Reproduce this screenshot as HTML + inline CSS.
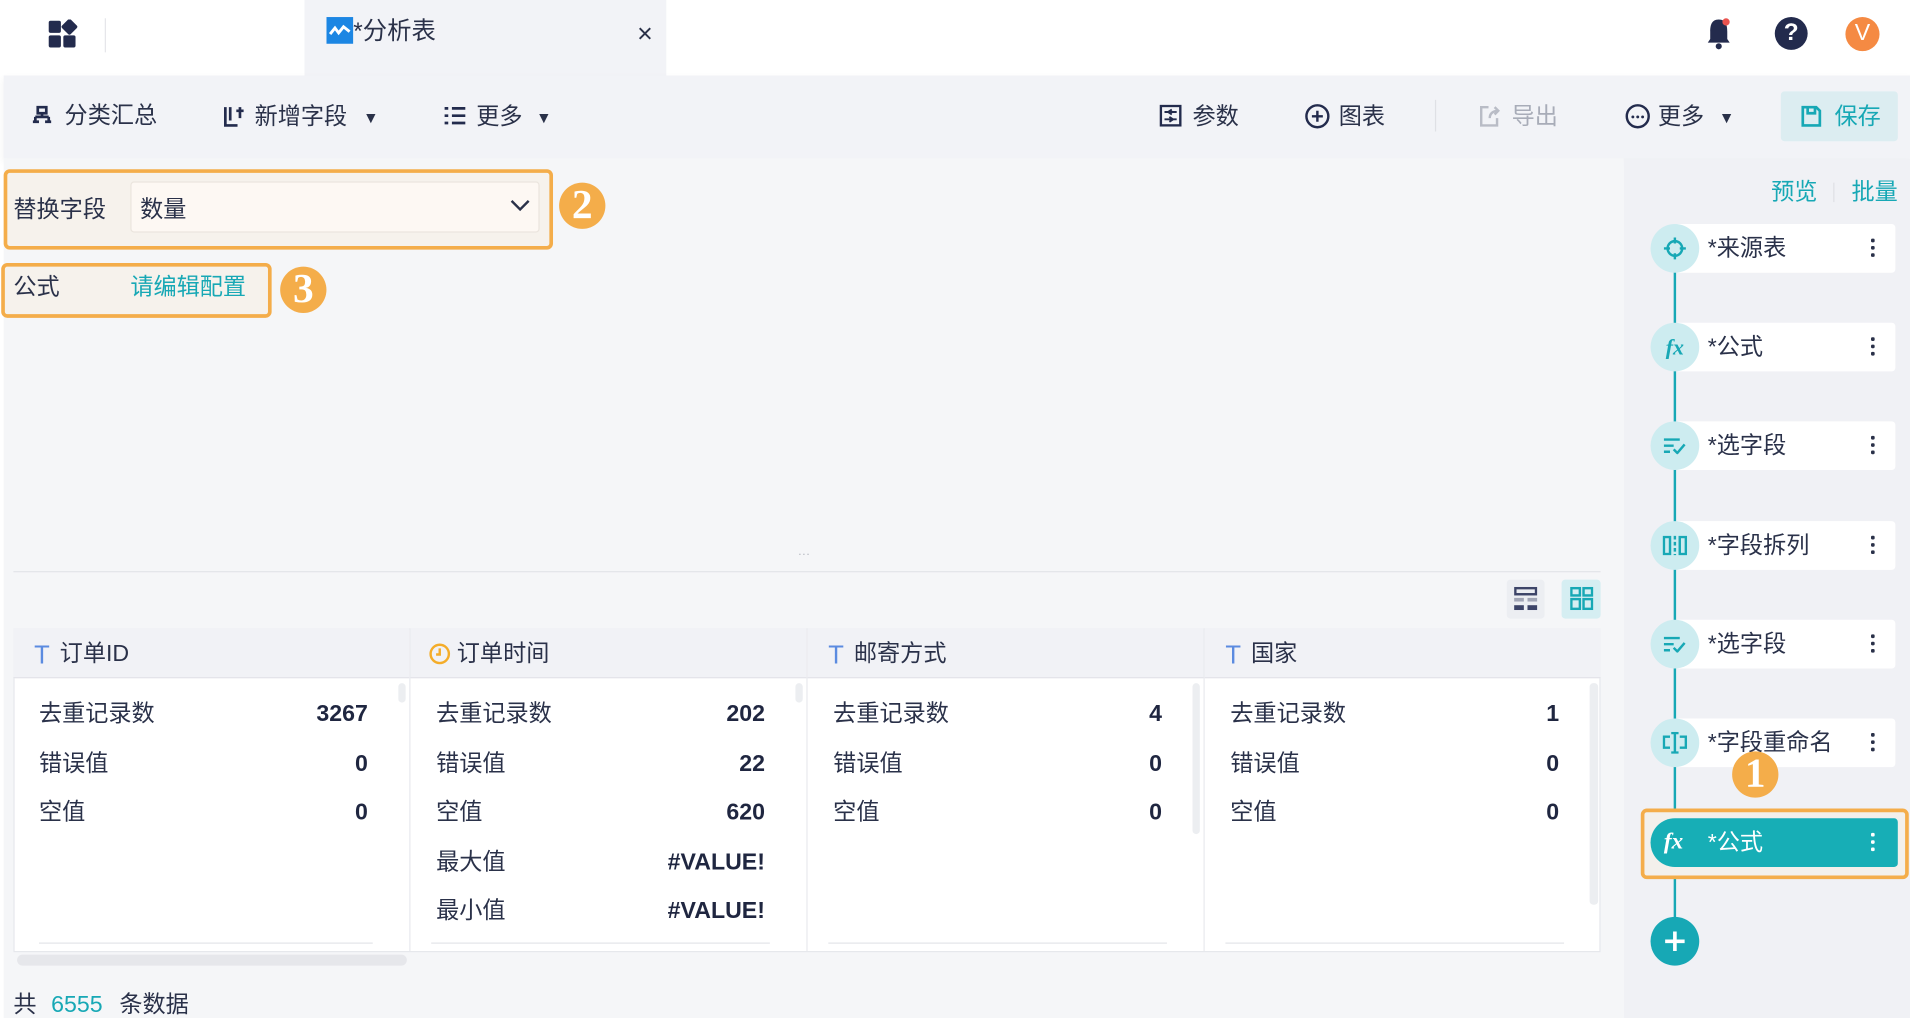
<!DOCTYPE html>
<html><head><meta charset="utf-8"><style>
*{box-sizing:border-box;margin:0;padding:0}
html,body{width:1910px;height:1018px;overflow:hidden;background:#fff}
body{font-family:"Liberation Sans","Noto Sans CJK SC",sans-serif;color:#2a3149}
#w{position:absolute;left:0;top:0;width:1568px;height:836px;transform:scale(1.2181,1.2177);transform-origin:0 0;font-size:19px}
.a{position:absolute}
.t{position:absolute;white-space:nowrap;line-height:1;padding-top:1px}
.teal{color:#17a8b5}
.badge{position:absolute;width:38px;height:38px;border-radius:50%;background:#f4ad4a;color:#fff;font-family:"Liberation Serif",serif;font-weight:bold;font-size:34px;text-align:center;line-height:38px}
.card{position:absolute;left:1375px;width:181px;height:40px;background:#fff;border-radius:3px}
.circ{position:absolute;left:1355px;width:40px;height:40px;border-radius:50%;background:#cdecf0;display:flex;align-items:center;justify-content:center;color:#17a8b5}
.ctext{position:absolute;left:1402px;font-size:19px;line-height:1;padding-top:1px}
.dots{position:absolute;left:1536px;width:4px}
.dots i{display:block;width:3px;height:3px;background:#2a3149;margin:0 0 3px 0;border-radius:1px}
.col{position:absolute;top:516px;width:326px;height:265px;border-right:1px solid #e8e9ee}
.hd{position:absolute;left:0;top:0;width:100%;height:41px;background:#f1f2f6;border-bottom:1px solid #e3e4e9}
.row{position:absolute;left:21px;right:34px;font-size:19px;line-height:1;padding-top:1px}
.row b{position:absolute;right:0;top:1px;font-weight:bold;color:#1f2640}
</style></head><body><div id="w">
<div class="a" style="left:0;top:0;width:1568px;height:62px;background:#fff"></div>
<svg class="a" style="left:39px;top:16px" width="26" height="26" viewBox="0 0 26 26"><rect x="1" y="1" width="10" height="10" rx="1.5" fill="#232b4d"/><rect x="13" y="1" width="10" height="10" rx="1.5" fill="#232b4d" transform="rotate(45 18 6)"/><rect x="1" y="13" width="10" height="10" rx="1.5" fill="#232b4d"/><rect x="13" y="13" width="10" height="10" rx="1.5" fill="#232b4d"/></svg>
<div class="a" style="left:86px;top:15px;width:1px;height:28px;background:#e5e6ea"></div>
<div class="a" style="left:250px;top:0;width:297px;height:62px;background:#f2f3f7"></div>
<svg class="a" style="left:268px;top:14px" width="22" height="22" viewBox="0 0 22 22"><rect width="22" height="22" fill="#1c86e3"/><path d="M3 14 L7 9 L10 13 L14 8 L19 12" stroke="#fff" stroke-width="2.4" fill="none"/></svg>
<div class="t" style="left:290px;top:15px;font-size:20px">*分析表</div>
<div class="t" style="left:523px;top:16px;font-size:22px;color:#2a3149">×</div>
<svg class="a" style="left:1398px;top:13px" width="26" height="28" viewBox="0 0 26 28"><path d="M13 3 C7 3 6 8 6 13 L6 19 L4 22 L22 22 L20 19 L20 13 C20 8 19 3 13 3Z" fill="#232b4d"/><circle cx="13" cy="25" r="2.5" fill="#232b4d"/><circle cx="19" cy="5" r="3" fill="#e9534f"/></svg>
<div class="a" style="left:1457px;top:14px;width:27px;height:27px;border-radius:50%;background:#232b4d;color:#fff;font-weight:bold;font-size:20px;text-align:center;line-height:27px">?</div>
<div class="a" style="left:1515px;top:14px;width:28px;height:28px;border-radius:50%;background:#f58a43;color:#fff;font-size:19px;text-align:center;line-height:28px">V</div>
<div class="a" style="left:3px;top:62px;width:1565px;height:68px;background:#f2f3f7;box-shadow:0 3px 6px rgba(0,0,0,.06)"></div>
<svg class="a" style="left:26px;top:86px" width="17" height="16" viewBox="0 0 17 16"><path d="M5 2h7v5H5z M8.5 7v3 M3 10h11 M3 10v4 M14 10v4 M1 14h5 M11 14h5" stroke="#232b4d" stroke-width="2.2" fill="none"/></svg>
<div class="t" style="left:53px;top:85px">分类汇总</div>
<svg class="a" style="left:183px;top:86px" width="20" height="19" viewBox="0 0 20 19"><path d="M2 2v15h10 M6 2v11 M14 2v9 M11 5h6" stroke="#232b4d" stroke-width="2.2" fill="none"/></svg>
<div class="t" style="left:209px;top:86px">新增字段</div>
<div class="t" style="left:298px;top:89px;font-size:13px">▼</div>
<svg class="a" style="left:364px;top:86px" width="19" height="18" viewBox="0 0 19 18"><path d="M1 3h3M7 3h11M1 9h3M7 9h11M1 15h3M7 15h11" stroke="#232b4d" stroke-width="2.2"/></svg>
<div class="t" style="left:391px;top:86px">更多</div>
<div class="t" style="left:440px;top:89px;font-size:13px">▼</div>
<svg class="a" style="left:952px;top:86px" width="18" height="18" viewBox="0 0 18 18"><rect x="1" y="1" width="16" height="16" fill="none" stroke="#232b4d" stroke-width="2"/><path d="M4 6h10M4 12h10M10 4l-3 2 3 2M8 10l3 2-3 2" stroke="#232b4d" stroke-width="1.6" fill="none"/></svg>
<div class="t" style="left:979px;top:86px">参数</div>
<svg class="a" style="left:1071px;top:85px" width="21" height="21" viewBox="0 0 21 21"><circle cx="10.5" cy="10.5" r="9" fill="none" stroke="#232b4d" stroke-width="2"/><path d="M10.5 6v9M6 10.5h9" stroke="#232b4d" stroke-width="2"/></svg>
<div class="t" style="left:1099px;top:86px">图表</div>
<div class="a" style="left:1178px;top:82px;width:1px;height:26px;background:#dfe0e5"></div>
<svg class="a" style="left:1214px;top:86px" width="18" height="19" viewBox="0 0 18 19"><path d="M8 2H2v15h13v-6" stroke="#b9bcc6" stroke-width="2" fill="none"/><path d="M9 11c0-4 3-6 7-6M13 2l3 3-3 3" stroke="#b9bcc6" stroke-width="2" fill="none"/></svg>
<div class="t" style="left:1241px;top:86px;color:#a8acb8">导出</div>
<svg class="a" style="left:1334px;top:85px" width="21" height="21" viewBox="0 0 21 21"><circle cx="10.5" cy="10.5" r="9" fill="none" stroke="#232b4d" stroke-width="2"/><circle cx="6.5" cy="11" r="1.2" fill="#232b4d"/><circle cx="10.5" cy="11" r="1.2" fill="#232b4d"/><circle cx="14.5" cy="11" r="1.2" fill="#232b4d"/></svg>
<div class="t" style="left:1361px;top:86px">更多</div>
<div class="t" style="left:1411px;top:89px;font-size:13px">▼</div>
<div class="a" style="left:1462px;top:75px;width:96px;height:41px;background:#dcedf1;border-radius:3px"></div>
<svg class="a" style="left:1478px;top:86px" width="18" height="19" viewBox="0 0 18 19"><path d="M2 2h11l3 3v12H2z M6 2v5h6V2" stroke="#17a8b5" stroke-width="2.2" fill="none"/></svg>
<div class="t teal" style="left:1506px;top:86px">保存</div>
<div class="a" style="left:3px;top:130px;width:1330px;height:706px;background:#f5f6f8"></div>
<div class="a" style="left:1333px;top:130px;width:235px;height:706px;background:#f0f1f5"></div>
<div class="a" style="left:3px;top:139px;width:451px;height:66px;border:3px solid #f4ad4a;border-radius:5px;background:#f6f2ec"></div>
<div class="t" style="left:11px;top:162px">替换字段</div>
<div class="a" style="left:107px;top:149px;width:336px;height:42px;background:#fdf8f3;border:1px solid #ebe5de;border-radius:3px"></div>
<div class="t" style="left:115px;top:162px">数量</div>
<svg class="a" style="left:418px;top:163px" width="18" height="12" viewBox="0 0 18 12"><path d="M2 2l7 7 7-7" stroke="#2a3149" stroke-width="2" fill="none"/></svg>
<div class="badge" style="left:459px;top:150px">2</div>
<div class="a" style="left:1px;top:216px;width:222px;height:45px;border:3px solid #f4ad4a;border-radius:5px;background:#f6f2ec"></div>
<div class="t" style="left:11px;top:226px">公式</div>
<div class="t teal" style="left:107px;top:226px">请编辑配置</div>
<div class="badge" style="left:230px;top:219px">3</div>
<div class="t" style="left:655px;top:450px;font-size:10px;color:#b3b6bf">···</div>
<div class="a" style="left:11px;top:469px;width:1303px;height:1px;background:#e3e4e9"></div>
<div class="a" style="left:1237px;top:476px;width:31px;height:32px;background:#eceef2;border-radius:3px"></div>
<svg class="a" style="left:1243px;top:482px" width="19" height="19" viewBox="0 0 19 19"><rect x="1" y="1" width="17" height="5" fill="none" stroke="#3d4468" stroke-width="2"/><rect x="0" y="9" width="8" height="3" fill="#a2a6b6"/><rect x="11" y="9" width="8" height="3" fill="#a2a6b6"/><rect x="0" y="15" width="8" height="4" fill="#3d4468"/><rect x="11" y="15" width="8" height="4" fill="#3d4468"/></svg>
<div class="a" style="left:1282px;top:476px;width:32px;height:32px;background:#d5eef2;border-radius:3px"></div>
<svg class="a" style="left:1289px;top:482px" width="19" height="19" viewBox="0 0 19 19"><g fill="none" stroke="#17a8b5" stroke-width="2"><rect x="1" y="1" width="7" height="6"/><rect x="11" y="1" width="7" height="6"/><rect x="1" y="10" width="7" height="8"/><rect x="11" y="10" width="7" height="8"/></g></svg>
<div class="a" style="left:11px;top:516px;width:1303px;height:266px;background:#fff;border:1px solid #e6e7ec"></div>
<div class="col" style="left:11px"><div class="hd"></div>
<div class="t" style="left:17px;top:11px;color:#5b8be0;font-size:21px">T</div><div class="t" style="left:38px;top:11px">订单ID</div>
<div class="row" style="top:60px">去重记录数<b>3267</b></div><div class="row" style="top:101px">错误值<b>0</b></div><div class="row" style="top:141px">空值<b>0</b></div>
<div class="a" style="right:3px;top:45px;width:6px;height:16px;background:#eceef1;border-radius:3px"></div>
<div class="a" style="left:21px;top:258px;width:274px;height:1px;background:#e3e4e9"></div></div>
<div class="col" style="left:337px"><div class="hd"></div>
<svg class="a" style="left:15px;top:12px" width="18" height="18" viewBox="0 0 18 18"><circle cx="9" cy="9" r="7.5" fill="none" stroke="#f4ad2a" stroke-width="2"/><path d="M9 4.5v5h-3" stroke="#f4ad2a" stroke-width="2" fill="none"/></svg>
<div class="t" style="left:38px;top:11px">订单时间</div>
<div class="row" style="top:60px">去重记录数<b>202</b></div><div class="row" style="top:101px">错误值<b>22</b></div><div class="row" style="top:141px">空值<b>620</b></div><div class="row" style="top:182px">最大值<b>#VALUE!</b></div><div class="row" style="top:222px">最小值<b>#VALUE!</b></div>
<div class="a" style="right:3px;top:45px;width:6px;height:16px;background:#eceef1;border-radius:3px"></div>
<div class="a" style="left:17px;top:258px;width:278px;height:1px;background:#e3e4e9"></div></div>
<div class="col" style="left:663px"><div class="hd"></div>
<div class="t" style="left:17px;top:11px;color:#5b8be0;font-size:21px">T</div><div class="t" style="left:38px;top:11px">邮寄方式</div>
<div class="row" style="top:60px">去重记录数<b>4</b></div><div class="row" style="top:101px">错误值<b>0</b></div><div class="row" style="top:141px">空值<b>0</b></div>
<div class="a" style="right:3px;top:45px;width:6px;height:124px;background:#eceef1;border-radius:3px"></div>
<div class="a" style="left:17px;top:258px;width:278px;height:1px;background:#e3e4e9"></div></div>
<div class="col" style="left:989px;width:325px;border-right:none"><div class="hd"></div>
<div class="t" style="left:17px;top:11px;color:#5b8be0;font-size:21px">T</div><div class="t" style="left:38px;top:11px">国家</div>
<div class="row" style="top:60px">去重记录数<b>1</b></div><div class="row" style="top:101px">错误值<b>0</b></div><div class="row" style="top:141px">空值<b>0</b></div>
<div class="a" style="right:2px;top:45px;width:7px;height:182px;background:#eceef1;border-radius:3px"></div>
<div class="a" style="left:17px;top:258px;width:278px;height:1px;background:#e3e4e9"></div></div>
<div class="a" style="left:14px;top:784px;width:320px;height:9px;background:#e6e7eb;border-radius:5px"></div>
<div class="t" style="left:11px;top:815px">共</div>
<div class="t teal" style="left:42px;top:815px">6555</div>
<div class="t" style="left:98px;top:815px">条数据</div>
<div class="t teal" style="left:1454px;top:148px">预览</div>
<div class="a" style="left:1505px;top:150px;width:1px;height:16px;background:#dfe0e5"></div>
<div class="t teal" style="left:1520px;top:148px">批量</div>
<div class="a" style="left:1374px;top:204px;width:2px;height:570px;background:#17a8b5"></div>

<div class="card" style="top:184px"></div><div class="circ" style="top:184px"><svg width="20" height="20" viewBox="0 0 20 20"><circle cx="10" cy="10" r="6" fill="none" stroke="#17a8b5" stroke-width="2"/><path d="M10 1v5M10 14v5M1 10h5M14 10h5" stroke="#17a8b5" stroke-width="2"/></svg></div>
<div class="ctext" style="top:194px">*来源表</div><div class="dots" style="top:196px"><i></i><i></i><i></i></div>

<div class="card" style="top:265px"></div><div class="circ" style="top:265px;font-style:italic;font-weight:bold;font-family:'Liberation Serif',serif;font-size:18px">fx</div>
<div class="ctext" style="top:275px">*公式</div><div class="dots" style="top:277px"><i></i><i></i><i></i></div>

<div class="card" style="top:346px"></div><div class="circ" style="top:346px"><svg width="20" height="14" viewBox="0 0 20 14"><path d="M1 2h13M1 7h8M1 12h5M9 10l3 3 6-7" stroke="#17a8b5" stroke-width="2" fill="none"/></svg></div>
<div class="ctext" style="top:356px">*选字段</div><div class="dots" style="top:358px"><i></i><i></i><i></i></div>

<div class="card" style="top:428px"></div><div class="circ" style="top:428px"><svg width="20" height="16" viewBox="0 0 20 16"><rect x="1" y="1" width="5" height="14" fill="none" stroke="#17a8b5" stroke-width="2"/><rect x="14" y="1" width="5" height="14" fill="none" stroke="#17a8b5" stroke-width="2"/><path d="M10 0v16" stroke="#17a8b5" stroke-width="2" stroke-dasharray="3 2"/></svg></div>
<div class="ctext" style="top:438px">*字段拆列</div><div class="dots" style="top:440px"><i></i><i></i><i></i></div>

<div class="card" style="top:509px"></div><div class="circ" style="top:509px"><svg width="20" height="14" viewBox="0 0 20 14"><path d="M1 2h13M1 7h8M1 12h5M9 10l3 3 6-7" stroke="#17a8b5" stroke-width="2" fill="none"/></svg></div>
<div class="ctext" style="top:519px">*选字段</div><div class="dots" style="top:521px"><i></i><i></i><i></i></div>

<div class="card" style="top:590px"></div><div class="circ" style="top:590px"><svg width="20" height="18" viewBox="0 0 20 18"><path d="M6 4H1v9h5M14 4h5v9h-5M7 1h6M7 17h6M10 1v16" stroke="#17a8b5" stroke-width="2" fill="none"/></svg></div>
<div class="ctext" style="top:600px">*字段重命名</div><div class="dots" style="top:602px"><i></i><i></i><i></i></div>
<div class="badge" style="left:1422px;top:617px">1</div>

<div class="a" style="left:1347px;top:664px;width:220px;height:58px;border:3px solid #f4ad4a;border-radius:5px;background:#f3f0eb"></div>
<div class="a" style="left:1355px;top:672px;width:203px;height:40px;background:#17aeb6;border-radius:20px 3px 3px 20px"></div>
<div class="t" style="left:1366px;top:681px;color:#fff;font-style:italic;font-weight:bold;font-family:'Liberation Serif',serif;font-size:19px">fx</div>
<div class="ctext" style="top:682px;color:#fff">*公式</div>
<div class="dots" style="top:684px"><i style="background:#fff"></i><i style="background:#fff"></i><i style="background:#fff"></i></div>
<div class="a" style="left:1355px;top:753px;width:40px;height:40px;border-radius:50%;background:#17a8b5"></div>
<svg class="a" style="left:1366px;top:764px" width="18" height="18" viewBox="0 0 18 18"><path d="M9 1v16M1 9h16" stroke="#fff" stroke-width="3"/></svg>
</div></body></html>
